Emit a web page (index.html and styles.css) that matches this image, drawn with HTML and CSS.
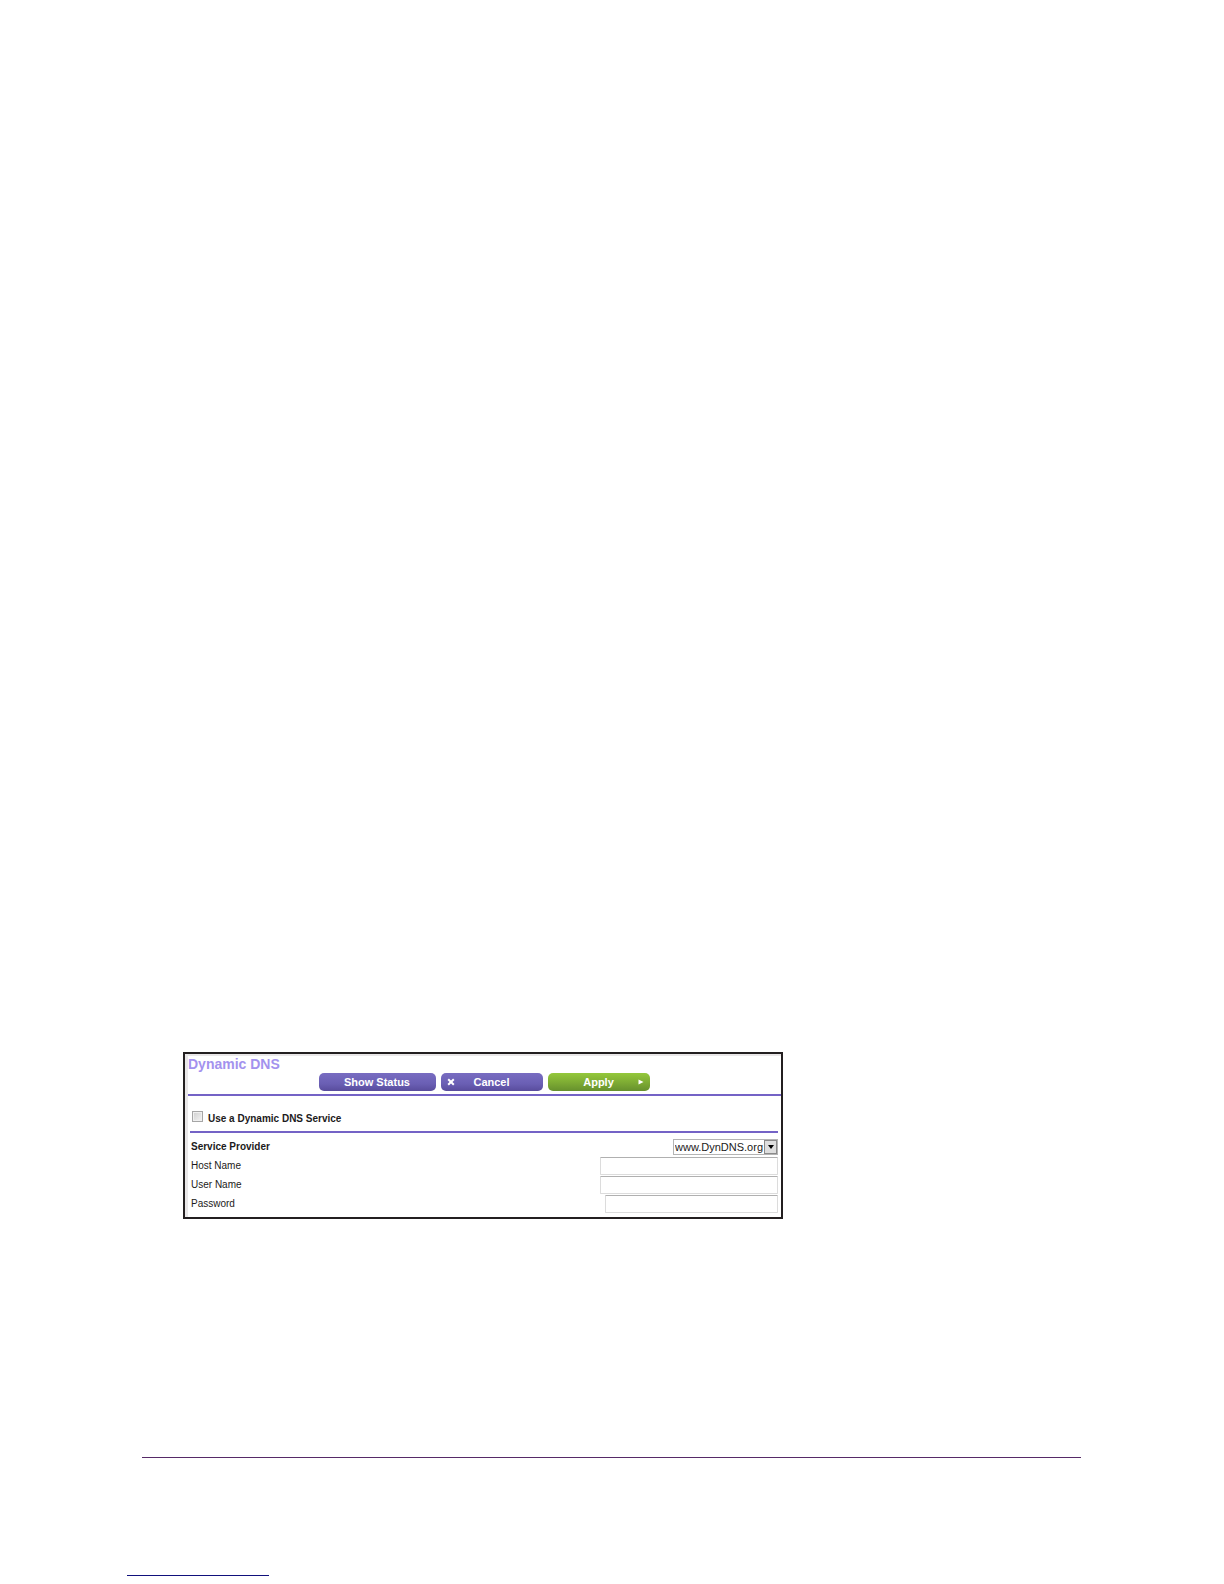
FILE: index.html
```html
<!DOCTYPE html>
<html lang="en">
<head>
<meta charset="utf-8">
<meta name="viewport" content="width=device-width, initial-scale=1">
<title>Dynamic DNS</title>
<link rel="stylesheet" href="styles.css">
</head>
<body>
<main class="page">
  <form class="panel">
    <h1 class="title">Dynamic DNS</h1>
    <div class="actions">
      <button class="btn btn-wide" type="button">Show Status</button>
      <button class="btn" type="button">
        <svg class="icon icon-left" viewBox="0 0 8 8" aria-hidden="true"><path d="M1.2 1.2 6.8 6.8M6.8 1.2 1.2 6.8" stroke="#fff" stroke-width="2" fill="none"/></svg>
        Cancel
      </button>
      <button class="btn btn-apply" type="submit">
        Apply
        <svg class="icon icon-right" viewBox="0 0 8 8" aria-hidden="true"><path d="M1.5 1.5 6.5 4 1.5 6.5Z" fill="#fff"/></svg>
      </button>
    </div>
    <hr class="rule">
    <div class="body">
      <label class="enable"><input class="check" type="checkbox">Use a Dynamic DNS Service</label>
      <hr class="rule rule-inner">
      <div class="row">
        <label class="strong" for="provider">Service Provider</label>
        <span class="picker">
          <select class="select" id="provider"><option>www.DynDNS.org</option></select>
          <span class="arrow"><svg viewBox="0 0 6 4" width="6" height="4" aria-hidden="true"><path d="M0 0H6L3 4Z" fill="#000"/></svg></span>
        </span>
      </div>
      <div class="row"><label for="host">Host Name</label><input class="field" id="host" type="text"></div>
      <div class="row"><label for="user">User Name</label><input class="field" id="user" type="text"></div>
      <div class="row"><label for="password">Password</label><input class="field field-short" id="password" type="password"></div>
    </div>
  </form>
  <footer class="footer">
    <hr class="footer-rule">
    <hr class="link-rule">
  </footer>
</main>
</body>
</html>
```
FILE: styles.css
```css
* {
  box-sizing: border-box;
}

body {
  margin: 0;
  background: #fff;
  color: #1c1a20;
  font: 10px/14px "Liberation Sans", Arial, sans-serif;
}

hr {
  margin: 0;
  border: 0;
}

.page {
  display: flex;
  flex-direction: column;
  justify-content: flex-end;
  min-height: 100vh;
  padding: 0 143px 8px 127px;
}

.panel {
  width: 100%;
  max-width: 600px;
  margin: 0 0 238px 56px;
  border: 2px solid #231f20;
  box-shadow: inset 3px 2px #e9e7e8;
  padding: 2px 0 4px 3px;
}

.title {
  margin: 0;
  color: #a392ee;
  font-size: 14px;
  line-height: 17px;
}

.actions {
  display: flex;
  justify-content: center;
  gap: 5px;
  padding: 0 1px 3px 0;
}

.btn {
  position: relative;
  width: 102px;
  height: 18px;
  padding: 0;
  border: 0;
  border-radius: 5px;
  background: linear-gradient(#786cc1, #6a5fb4 60%, #584c9c);
  color: #fff;
  font: bold 11px/16px "Liberation Sans", Arial, sans-serif;
}

.btn-wide {
  width: 117px;
}

.btn-apply {
  background: linear-gradient(#94c83b, #7fad34 50%, #66902d);
}

.icon {
  position: absolute;
  top: 5px;
  width: 8px;
  height: 8px;
}

.icon-left {
  left: 6px;
}

.icon-right {
  right: 5px;
}

.rule {
  height: 2px;
  background: #7463c6;
}

.body {
  padding: 0 3px;
}

.enable {
  display: flex;
  align-items: flex-end;
  gap: 5px;
  height: 35px;
  padding: 0 0 5px 1px;
  font-weight: bold;
}

.check {
  appearance: none;
  width: 11px;
  height: 11px;
  margin: 0 0 4px;
  border: 1px solid #a6a6a6;
  background: linear-gradient(135deg, #cfcfcf, #f4f4f4);
  box-shadow: inset 0 0 0 1px #f0f0f0;
}

.rule-inner {
  margin: 0 0 5px -1px;
}

.row {
  display: flex;
  align-items: center;
  justify-content: space-between;
  min-height: 18px;
  margin-bottom: 1px;
}

.row:last-child {
  margin-bottom: 0;
}

.strong {
  font-weight: bold;
}

.picker {
  display: flex;
  width: 105px;
  height: 16px;
  border: 1px solid #b4b4b4;
}

.select {
  appearance: none;
  flex: 1;
  min-width: 0;
  padding: 0 0 0 1px;
  border: 0;
  background: #fff;
  color: #1c1a20;
  font: 11px/14px "Liberation Sans", Arial, sans-serif;
}

.arrow {
  display: flex;
  align-items: center;
  justify-content: center;
  width: 13px;
  border: 1px solid #8a8a8a;
  background: #dedede;
}

.field {
  width: 178px;
  height: 18px;
  border: 1px solid #dcdcdc;
  border-top-color: #b0b0b0;
  border-radius: 1px;
  background: #fff;
  font: inherit;
}

.field-short {
  width: 173px;
}

.footer-rule {
  height: 1px;
  margin: 0 0 117px 15px;
  background: #562a67;
}

.link-rule {
  width: 142px;
  height: 1px;
  background: #11117c;
}
```
